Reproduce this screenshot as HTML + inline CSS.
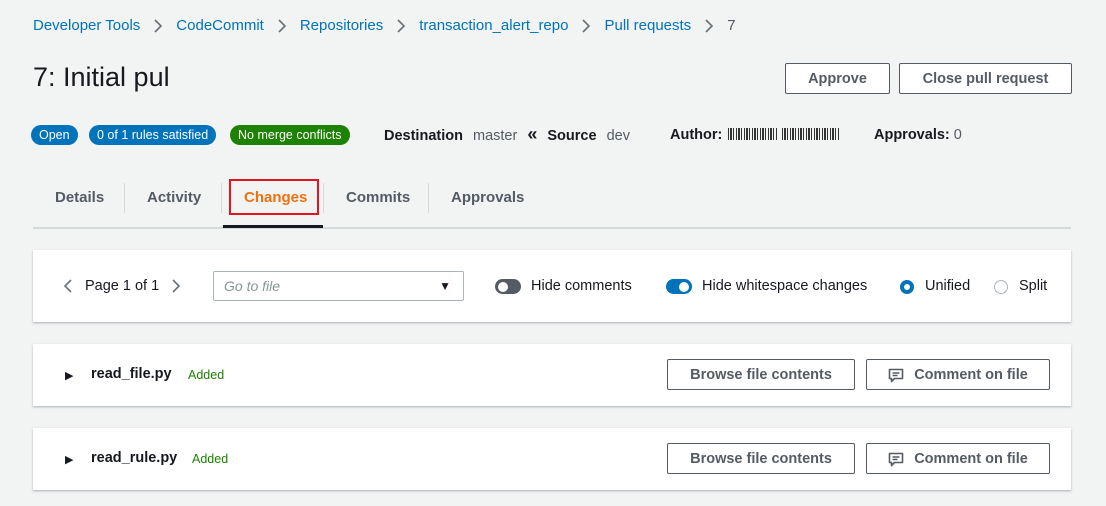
<!DOCTYPE html>
<html><head><style>
*{box-sizing:border-box;margin:0;padding:0}
body{width:1106px;height:506px;background:#f2f3f3;font-family:"Liberation Sans",sans-serif;color:#16191f;position:relative;overflow:hidden;font-size:14px}
.a{position:absolute;white-space:nowrap}
.bc{color:#0073bb;font-size:15px}
.sep{display:inline-block;vertical-align:middle;margin:0 13px}
.btn{position:absolute;border:1px solid #545b64;background:#fff;font-weight:bold;color:#545b64;font-size:14.5px;display:flex;align-items:center;justify-content:center;border-radius:2px}
.badge{position:absolute;top:125px;height:20px;border-radius:10px;color:#fff;font-size:12.5px;line-height:20px;padding:0 8px}
.tab{position:absolute;top:189px;font-weight:bold;color:#545b64;font-size:15px}
.tsep{position:absolute;top:183px;width:1px;height:30px;background:#d5dbdb}
.panel{position:absolute;left:33px;width:1038px;background:#fff;box-shadow:0 1px 2px rgba(0,22,43,.3)}
.bar{display:inline-block;height:12px;background:repeating-linear-gradient(90deg,#333 0 1px,transparent 1px 2px,#333 2px 4px,transparent 4px 5px,#333 5px 6px,transparent 6px 8px);vertical-align:-1px}
</style></head><body>
<svg width="0" height="0" style="position:absolute"><defs>
<symbol id="gt" viewBox="0 0 10 14"><path d="M2 1l6 6-6 6" fill="none" stroke="#687078" stroke-width="1.6"/></symbol>
<symbol id="cm" viewBox="0 0 16 16"><path d="M1.5 2.5h13v9h-8l-3 3v-3h-2z" fill="none" stroke="#545b64" stroke-width="1.6" stroke-linejoin="round"/><path d="M4.5 6h7M4.5 8.5h5" stroke="#545b64" stroke-width="1.4"/></symbol>
</defs></svg>
<div class="a" style="left:33px;top:17px"><span class="bc">Developer Tools</span><svg class="sep" width="10" height="14"><use href="#gt"/></svg><span class="bc">CodeCommit</span><svg class="sep" width="10" height="14"><use href="#gt"/></svg><span class="bc">Repositories</span><svg class="sep" width="10" height="14"><use href="#gt"/></svg><span class="bc">transaction_alert_repo</span><svg class="sep" width="10" height="14"><use href="#gt"/></svg><span class="bc">Pull requests</span><svg class="sep" width="10" height="14"><use href="#gt"/></svg><span style="font-size:15px;color:#545b64">7</span></div>
<div class="a" style="left:33px;top:62px;font-size:27px">7: Initial pul</div>
<div class="btn" style="left:785px;top:63px;width:105px;height:31px">Approve</div>
<div class="btn" style="left:899px;top:63px;width:173px;height:31px">Close pull request</div>
<div class="badge" style="left:31px;background:#0073bb">Open</div>
<div class="badge" style="left:89px;background:#0073bb">0 of 1 rules satisfied</div>
<div class="badge" style="left:230px;background:#1d8102">No merge conflicts</div>
<div class="a" style="left:384px;top:127px;font-size:14.5px"><b>Destination</b> <span style="color:#545b64;margin-left:6px">master</span> <b style="margin-left:6px;font-size:18px;line-height:14px">«</b> <b style="margin-left:6px">Source</b> <span style="color:#545b64;margin-left:6px">dev</span></div>
<div class="a" style="left:670px;top:127px;font-size:14.5px"><b>Author:</b> <span class="bar" style="width:50px;margin-left:2px"></span> <span class="bar" style="width:58px"></span></div>
<div class="a" style="left:874px;top:127px;font-size:14.5px"><b>Approvals:</b> <span style="color:#545b64">0</span></div>
<div class="tab" style="left:55px">Details</div>
<div class="tsep" style="left:124px"></div>
<div class="tab" style="left:147px">Activity</div>
<div class="tsep" style="left:221px"></div>
<div class="a" style="left:229px;top:179px;width:90px;height:36px;border:2px solid #e4141c"></div>
<div class="tab" style="left:244px;color:#ec7211">Changes</div>
<div class="tsep" style="left:323px"></div>
<div class="tab" style="left:346px">Commits</div>
<div class="tsep" style="left:428px"></div>
<div class="tab" style="left:451px">Approvals</div>
<div class="a" style="left:33px;top:227px;width:1038px;height:2px;background:#d5dbdb"></div>
<div class="a" style="left:223px;top:225px;width:100px;height:3px;background:#16191f"></div>
<div class="panel" style="top:250px;height:72px">
 <svg class="a" style="left:30px;top:28px;transform:scaleX(-1)" width="10" height="16" viewBox="0 0 10 14"><use href="#gt"/></svg>
 <div class="a" style="left:52px;top:28px;color:#16191f;font-size:14.5px">Page 1 of 1</div>
 <svg class="a" style="left:138px;top:28px" width="10" height="16" viewBox="0 0 10 14"><use href="#gt"/></svg>
 <div class="a" style="left:180px;top:21px;width:251px;height:30px;border:1px solid #aab7b8;border-radius:2px"><span class="a" style="left:10px;top:6px;font-style:italic;color:#879596">Go to file</span><span class="a" style="right:12px;top:7px;font-size:12px;color:#16191f">▼</span></div>
 <div class="a" style="left:462px;top:29px;width:26px;height:15px;border-radius:8px;background:#545b64"><div class="a" style="left:3px;top:2.5px;width:10px;height:10px;border-radius:50%;background:#fff"></div></div>
 <div class="a" style="left:498px;top:28px;font-size:14.5px">Hide comments</div>
 <div class="a" style="left:633px;top:29px;width:26px;height:15px;border-radius:8px;background:#0073bb"><div class="a" style="left:13px;top:2.5px;width:10px;height:10px;border-radius:50%;background:#fff"></div></div>
 <div class="a" style="left:669px;top:28px;font-size:14.5px">Hide whitespace changes</div>
 <div class="a" style="left:867px;top:30px;width:14px;height:14px;border-radius:50%;border:4px solid #0073bb;background:#fff"></div>
 <div class="a" style="left:892px;top:28px;font-size:14.5px">Unified</div>
 <div class="a" style="left:961px;top:30px;width:14px;height:14px;border-radius:50%;border:1px solid #aab7b8"></div>
 <div class="a" style="left:986px;top:28px;font-size:14.5px">Split</div>
</div>
<div class="panel" style="top:344px;height:62px">
 <div class="a" style="left:32px;top:25px;font-size:11px">▶</div>
 <div class="a" style="left:58px;top:22px;font-weight:bold;font-size:14.5px">read_file.py</div>
 <div class="a" style="left:155px;top:24px;color:#1d8102;font-size:12.5px">Added</div>
 <div class="btn" style="left:634px;top:15px;width:188px;height:31px">Browse file contents</div>
 <div class="btn" style="left:833px;top:15px;width:184px;height:31px"><svg width="16" height="16" style="margin-right:10px"><use href="#cm"/></svg>Comment on file</div>
</div>
<div class="panel" style="top:428px;height:62px">
 <div class="a" style="left:32px;top:25px;font-size:11px">▶</div>
 <div class="a" style="left:58px;top:22px;font-weight:bold;font-size:14.5px">read_rule.py</div>
 <div class="a" style="left:159px;top:24px;color:#1d8102;font-size:12.5px">Added</div>
 <div class="btn" style="left:634px;top:15px;width:188px;height:31px">Browse file contents</div>
 <div class="btn" style="left:833px;top:15px;width:184px;height:31px"><svg width="16" height="16" style="margin-right:10px"><use href="#cm"/></svg>Comment on file</div>
</div>
</body></html>
